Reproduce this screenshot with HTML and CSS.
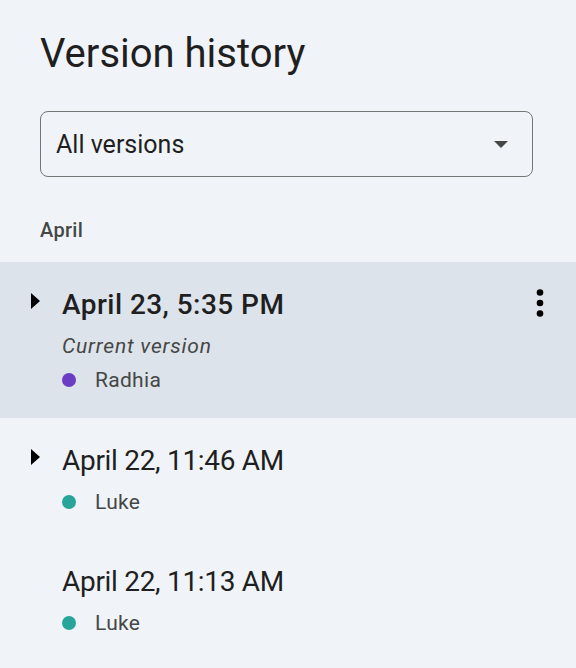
FILE: index.html
```html
<!DOCTYPE html>
<html lang="en">
<head>
<meta charset="utf-8">
<title>Version history</title>
<link rel="stylesheet" href="styles.css">
</head>
<body>
<div class="panel">
  <div class="top">
    <h1 class="title">Version history</h1>
    <div class="select">
      <span class="select-label">All versions</span>
      <svg class="select-arrow" width="14" height="7" viewBox="0 0 14 7"><polygon points="0,0 14,0 7,7" fill="#444746"/></svg>
    </div>
    <div class="section-label">April</div>
  </div>
  <div class="list">
    <div class="row current">
      <div class="row-head">
        <div class="caret-cell"><svg class="caret" width="9" height="16" viewBox="0 0 9 16"><polygon points="0,0 9,8 0,16" fill="#000"/></svg></div>
        <div class="row-title strong">April 23, 5:35 PM</div>
        <svg class="kebab" width="8" height="28" viewBox="0 0 8 28"><circle cx="4" cy="3.5" r="3.3" fill="#000"/><circle cx="4" cy="14" r="3.3" fill="#000"/><circle cx="4" cy="24.5" r="3.3" fill="#000"/></svg>
      </div>
      <div class="meta">
        <div class="meta-line italic">Current version</div>
        <div class="meta-line"><span class="dot purple"></span>Radhia</div>
      </div>
    </div>
    <div class="row">
      <div class="row-head">
        <div class="caret-cell"><svg class="caret" width="9" height="16" viewBox="0 0 9 16"><polygon points="0,0 9,8 0,16" fill="#000"/></svg></div>
        <div class="row-title">April 22, 11:46 AM</div>
      </div>
      <div class="meta">
        <div class="meta-line"><span class="dot teal"></span>Luke</div>
      </div>
    </div>
    <div class="row">
      <div class="row-head">
        <div class="caret-cell"></div>
        <div class="row-title">April 22, 11:13 AM</div>
      </div>
      <div class="meta">
        <div class="meta-line"><span class="dot teal"></span>Luke</div>
      </div>
    </div>
  </div>
</div>
</body>
</html>
```
FILE: styles.css
```css
* { box-sizing: border-box; }
html, body {
  margin: 0;
  padding: 0;
  background: #f0f4f9;
  font-family: Roboto, "Liberation Sans", sans-serif;
  color: #1f1f1f;
}
.panel {
  width: 576px;
  height: 668px;
  overflow: hidden;
}
.top {
  padding: 30px 43px 0 40px;
}
.title {
  margin: 0;
  font-size: 40px;
  line-height: 48px;
  font-weight: 400;
  letter-spacing: 0;
  color: #1f1f1f;
}
.select {
  margin-top: 33px;
  height: 66px;
  border: 1px solid #747775;
  border-radius: 8px;
  display: flex;
  align-items: center;
  justify-content: space-between;
  padding: 0 24px 0 15px;
}
.select-label {
  font-size: 25px;
  color: #1f1f1f;
}
.select-arrow {
  display: block;
}
.section-label {
  margin-top: 41px;
  font-size: 20px;
  line-height: 24px;
  font-weight: 500;
  letter-spacing: 0.3px;
  color: #444746;
}
.list {
  margin-top: 20px;
}
.row {
  padding: 25px 32px 20px 0;
}
.row.current {
  background: #dde3ea;
  padding-bottom: 21px;
}
.row-head {
  display: flex;
  align-items: flex-start;
}
.caret-cell {
  width: 62px;
  flex: none;
  padding-left: 31px;
  padding-top: 6px;
}
.caret { display: block; }
.row-title {
  font-size: 28px;
  line-height: 36px;
  font-weight: 400;
  letter-spacing: -0.3px;
  color: #1f1f1f;
}
.row-title.strong {
  font-weight: 500;
  letter-spacing: 0.45px;
}
.kebab {
  display: block;
  margin-left: auto;
  margin-top: 2px;
}
.meta {
  margin-top: 6px;
  padding-left: 62px;
}
.meta-line {
  display: flex;
  align-items: center;
  font-size: 21px;
  line-height: 34px;
  letter-spacing: 0.3px;
  color: #444746;
}
.meta-line.italic {
  letter-spacing: 0.8px;
}
.italic { font-style: italic; }
.dot {
  width: 14px;
  height: 14px;
  border-radius: 50%;
  margin-right: 19px;
  flex: none;
}
.dot.purple { background: #6a3dc2; }
.dot.teal { background: #27a59a; }
```
